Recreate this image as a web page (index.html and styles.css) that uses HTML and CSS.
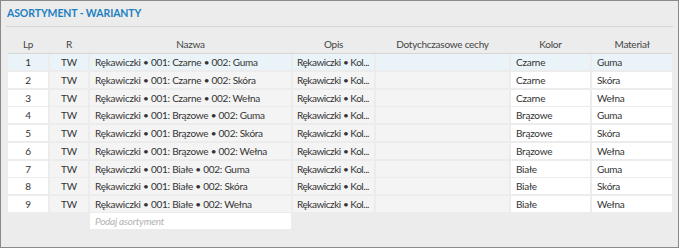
FILE: index.html
```html
<!doctype html>
<html>
<head>
  <meta charset="UTF-8">
  <meta name="viewport" content="width=device-width, initial-scale=1.0">
  <link rel="stylesheet" href="styles.css">
</head>
<body>
  <div class="Panel">
    <div class="Panel-title">ASORTYMENT - WARIANTY</div>

    <div class="Grid">
      <div class="Grid-head">
        <div>Lp</div>
        <div>R</div>
        <div>Nazwa</div>
        <div>Opis</div>
        <div>Dotychczasowe cechy</div>
        <div>Kolor</div>
        <div>Materiał</div>
      </div>

      <div class="Grid-body">
        <div class="Grid-row is-selected">
          <div class="cell center">1</div>
          <div class="cell center ro">TW</div>
          <div class="cell ro">Rękawiczki • 001: Czarne • 002: Guma</div>
          <div class="cell ro tight">Rękawiczki • Kol...</div>
          <div class="cell ro"></div>
          <div class="cell">Czarne</div>
          <div class="cell">Guma</div>
        </div>
        <div class="Grid-row">
          <div class="cell center">2</div>
          <div class="cell center ro">TW</div>
          <div class="cell ro">Rękawiczki • 001: Czarne • 002: Skóra</div>
          <div class="cell ro tight">Rękawiczki • Kol...</div>
          <div class="cell ro"></div>
          <div class="cell">Czarne</div>
          <div class="cell">Skóra</div>
        </div>
        <div class="Grid-row">
          <div class="cell center">3</div>
          <div class="cell center ro">TW</div>
          <div class="cell ro">Rękawiczki • 001: Czarne • 002: Wełna</div>
          <div class="cell ro tight">Rękawiczki • Kol...</div>
          <div class="cell ro"></div>
          <div class="cell">Czarne</div>
          <div class="cell">Wełna</div>
        </div>
        <div class="Grid-row">
          <div class="cell center">4</div>
          <div class="cell center ro">TW</div>
          <div class="cell ro">Rękawiczki • 001: Brązowe • 002: Guma</div>
          <div class="cell ro tight">Rękawiczki • Kol...</div>
          <div class="cell ro"></div>
          <div class="cell">Brązowe</div>
          <div class="cell">Guma</div>
        </div>
        <div class="Grid-row">
          <div class="cell center">5</div>
          <div class="cell center ro">TW</div>
          <div class="cell ro">Rękawiczki • 001: Brązowe • 002: Skóra</div>
          <div class="cell ro tight">Rękawiczki • Kol...</div>
          <div class="cell ro"></div>
          <div class="cell">Brązowe</div>
          <div class="cell">Skóra</div>
        </div>
        <div class="Grid-row">
          <div class="cell center">6</div>
          <div class="cell center ro">TW</div>
          <div class="cell ro">Rękawiczki • 001: Brązowe • 002: Wełna</div>
          <div class="cell ro tight">Rękawiczki • Kol...</div>
          <div class="cell ro"></div>
          <div class="cell">Brązowe</div>
          <div class="cell">Wełna</div>
        </div>
        <div class="Grid-row">
          <div class="cell center">7</div>
          <div class="cell center ro">TW</div>
          <div class="cell ro">Rękawiczki • 001: Białe • 002: Guma</div>
          <div class="cell ro tight">Rękawiczki • Kol...</div>
          <div class="cell ro"></div>
          <div class="cell">Białe</div>
          <div class="cell">Guma</div>
        </div>
        <div class="Grid-row">
          <div class="cell center">8</div>
          <div class="cell center ro">TW</div>
          <div class="cell ro">Rękawiczki • 001: Białe • 002: Skóra</div>
          <div class="cell ro tight">Rękawiczki • Kol...</div>
          <div class="cell ro"></div>
          <div class="cell">Białe</div>
          <div class="cell">Skóra</div>
        </div>
        <div class="Grid-row">
          <div class="cell center">9</div>
          <div class="cell center ro">TW</div>
          <div class="cell ro">Rękawiczki • 001: Białe • 002: Wełna</div>
          <div class="cell ro tight">Rękawiczki • Kol...</div>
          <div class="cell ro"></div>
          <div class="cell">Białe</div>
          <div class="cell">Wełna</div>
        </div>
      </div>

      <div class="Grid-new">
        <div class="Grid-input">Podaj asortyment</div>
      </div>
    </div>
  </div>
</body>
</html>
```

FILE: styles.css
```css
:root {
  --panel-bg: #ececec;
  --panel-border: #8a8a8a;
  --line-color: #d6d6d6;
  --title-color: #1c80c2;
  --text-color: #333333;
  --cell-ro: #f4f4f4;
  --cell-sel: #eaf4f8;
  --cols: 40px 38px 201px 81px 133px 79px 80px;
}

html, body {
  margin: 0;
  padding: 0;
  font-family: Lato, 'Noto Sans', Arial, sans-serif;
  font-size: 10px;
  letter-spacing: -0.25px;
  color: var(--text-color);
  background-color: #ffffff;
}

.Panel {
  width: 679px;
  height: 248px;
  box-sizing: border-box;
  border: 1px solid var(--panel-border);
  background-color: var(--panel-bg);
  padding: 0 5px;
}

.Panel-title {
  padding: 4px 1px 5px;
  line-height: 16px;
  font-size: 10.5px;
  font-weight: bold;
  letter-spacing: -0.1px;
  color: var(--title-color);
  border-bottom: 1px solid var(--line-color);
}

.Grid {
  margin-left: 2px;
  width: 664px;
}

.Grid-head {
  display: grid;
  grid-template-columns: var(--cols);
  column-gap: 2px;
  padding: 9px 0 1px;
  line-height: 16px;
  text-align: center;
  color: #444;
  border-bottom: 1px solid var(--line-color);
}

.Grid-body {
  display: flex;
  flex-direction: column;
  gap: 1.75px;
}

.Grid-row {
  display: grid;
  grid-template-columns: var(--cols);
  column-gap: 2px;
}

.cell {
  height: 16px;
  line-height: 16px;
  padding: 0 0 0 5px;
  background-color: #ffffff;
  white-space: nowrap;
  overflow: hidden;
}

.cell.ro {
  background-color: var(--cell-ro);
}

.cell.tight {
  padding-left: 4px;
  letter-spacing: -0.45px;
}

.cell.center {
  text-align: center;
  padding: 0;
}

.Grid-row.is-selected .cell {
  background-color: var(--cell-sel);
}

.Grid-new {
  display: grid;
  grid-template-columns: var(--cols);
  column-gap: 2px;
  margin-top: 1px;
}

.Grid-input {
  grid-column: 3;
  height: 16px;
  line-height: 16px;
  padding: 0 5px;
  background-color: #ffffff;
  font-style: italic;
  color: #b2b2b2;
}
```
